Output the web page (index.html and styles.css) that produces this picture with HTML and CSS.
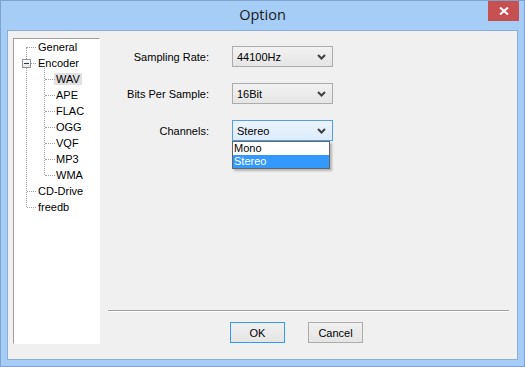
FILE: index.html
```html
<!DOCTYPE html>
<html lang="en">
<head>
  <meta charset="UTF-8">
  <title>Option</title>
  <link rel="stylesheet" href="styles.css">
</head>
<body>

  <div class="window">

    <!-- title bar -->
    <div class="titlebar">
      <span class="title">Option</span>
      <div class="close-btn">
        <svg width="10" height="8" viewBox="0 0 10 8">
          <path d="M1 0.5 L9 7.5 M9 0.5 L1 7.5" stroke="#fff" stroke-width="2"/>
        </svg>
      </div>
    </div>

    <div class="client">

      <!-- tree -->
      <div class="tree">
        <ul class="root">
          <li><span>General</span></li>
          <li class="open">
            <i class="expander"></i>
            <span>Encoder</span>
            <ul class="sub">
              <li><span class="selected">WAV</span></li>
              <li><span>APE</span></li>
              <li><span>FLAC</span></li>
              <li><span>OGG</span></li>
              <li><span>VQF</span></li>
              <li><span>MP3</span></li>
              <li><span>WMA</span></li>
            </ul>
          </li>
          <li><span>CD-Drive</span></li>
          <li><span>freedb</span></li>
        </ul>
      </div>

      <div class="panel">
        <div class="form">
          <div class="row">
            <label>Sampling Rate:</label>
            <div class="combo">
              <span>44100Hz</span>
              <svg class="chev" width="9" height="6" viewBox="0 0 9 6"><path d="M1 1 L4.5 4.5 L8 1" fill="none" stroke="#404040" stroke-width="2"/></svg>
            </div>
          </div>
          <div class="row">
            <label>Bits Per Sample:</label>
            <div class="combo">
              <span>16Bit</span>
              <svg class="chev" width="9" height="6" viewBox="0 0 9 6"><path d="M1 1 L4.5 4.5 L8 1" fill="none" stroke="#404040" stroke-width="2"/></svg>
            </div>
          </div>
          <div class="row">
            <label>Channels:</label>
            <div class="combo active">
              <span>Stereo</span>
              <svg class="chev" width="9" height="6" viewBox="0 0 9 6"><path d="M1 1 L4.5 4.5 L8 1" fill="none" stroke="#404040" stroke-width="2"/></svg>
              <ul class="dropdown">
                <li>Mono</li>
                <li class="hl">Stereo</li>
              </ul>
            </div>
          </div>
        </div>

        <div class="separator"></div>

        <div class="buttons">
          <button class="default">OK</button>
          <button>Cancel</button>
        </div>
      </div>

    </div>
  </div>

</body>
</html>
```

FILE: styles.css
```css
body {
  margin: 0;
  font-family: 'Liberation Sans', Arial, sans-serif;
  font-size: 11px;
  color: #000;
}

.window {
  width: 523px;
  height: 365px;
  border: 1px solid #7ea3cf;
  background: #a5cdf6;
  display: flex;
  flex-direction: column;
}

.titlebar {
  position: relative;
  height: 29px;
  display: flex;
  justify-content: center;
  align-items: center;
}

.title {
  font-family: 'Open Sans', 'Noto Sans', sans-serif;
  font-size: 14.5px;
  color: #1a1a1a;
  margin-top: -3px;
}

.close-btn {
  position: absolute;
  right: 5px;
  top: 0;
  width: 31px;
  height: 20px;
  background: #c75050;
  display: flex;
  justify-content: center;
  align-items: center;
}

.client {
  flex: 1;
  margin: 0 6px 6px;
  border: 1px solid #8aafd9;
  background: #f0f0f0;
  display: flex;
  padding: 7px 8px 0 5px;
}

/* tree */
.tree {
  width: 85px;
  height: 304px;
  background: #fff;
  border: 1px solid;
  border-color: #a0a0a0 #fff #fff #a0a0a0;
}

.tree ul {
  list-style: none;
  margin: 0;
  padding: 0;
  position: relative;
}

.tree ul::before {
  content: "";
  position: absolute;
  left: 0;
  top: 8px;
  bottom: 8px;
  border-left: 1px dotted #a0a0a0;
}

.tree li {
  position: relative;
  line-height: 16px;
}

.tree li::before {
  content: "";
  position: absolute;
  left: 1px;
  top: 8px;
  width: 9px;
  border-top: 1px dotted #a0a0a0;
}

.root {
  margin-left: 12px !important;
}

.root > li {
  padding-left: 11px;
}

.root span {
  padding: 0 1px;
}

.sub {
  margin-left: 7px !important;
}

.sub::before {
  top: -3px !important;
}

.sub > li {
  padding-left: 11px;
}

.sub > li::before {
  width: 10px;
}

.selected {
  background: #e1e1e1;
  padding: 0 2px !important;
  margin-left: -1px;
}

.expander {
  position: absolute;
  left: -4px;
  top: 4px;
  width: 7px;
  height: 7px;
  border: 1px solid #919191;
  background: linear-gradient(#fff, #e3e3e3);
  z-index: 1;
}

.expander::after {
  content: "";
  position: absolute;
  left: 1px;
  top: 3px;
  width: 5px;
  height: 1px;
  background: #1e395b;
}

/* right panel */
.panel {
  flex: 1;
  display: flex;
  flex-direction: column;
  margin-left: 8px;
}

.form {
  flex: 1;
  padding-top: 8px;
  display: flex;
  flex-direction: column;
  gap: 16px;
}

.row {
  display: flex;
  align-items: center;
}

.row label {
  width: 101px;
  text-align: right;
  margin-right: 23px;
}

.combo {
  position: relative;
  width: 96px;
  height: 19px;
  border: 1px solid #acacac;
  background: linear-gradient(#f2f2f2, #e5e5e5);
  display: flex;
  align-items: center;
  justify-content: space-between;
  padding: 0 0 0 3px;
  box-sizing: content-box;
}

.combo span {
  padding-left: 1px;
}

.chev {
  margin-right: 6px;
}

.combo.active {
  border-color: #569de5;
  background: linear-gradient(#ecf4fc, #dcecfc);
}

.dropdown {
  position: absolute;
  left: -1px;
  top: 20px;
  width: 96px;
  margin: 0;
  padding: 0;
  list-style: none;
  background: #fff;
  border: 1px solid #646464;
  box-shadow: 2px 2px 2px rgba(0,0,0,0.25);
  box-sizing: content-box;
}

.dropdown li {
  height: 13px;
  line-height: 13px;
  padding-left: 1px;
}

.dropdown .hl {
  background: #3399ff;
  color: #fff;
}

.separator {
  height: 1px;
  background: #a0a0a0;
  border-bottom: 1px solid #fff;
  margin-bottom: 10px;
}

.buttons {
  display: flex;
  gap: 23px;
  padding-left: 122px;
  margin-bottom: 16px;
}

button {
  width: 55px;
  height: 21px;
  font-family: 'Liberation Sans', Arial, sans-serif;
  font-size: 11px;
  color: #000;
  border: 1px solid #acacac;
  background: linear-gradient(#f0f0f0, #e5e5e5);
  padding: 0;
}

button.default {
  border-color: #3399ff;
}
```
